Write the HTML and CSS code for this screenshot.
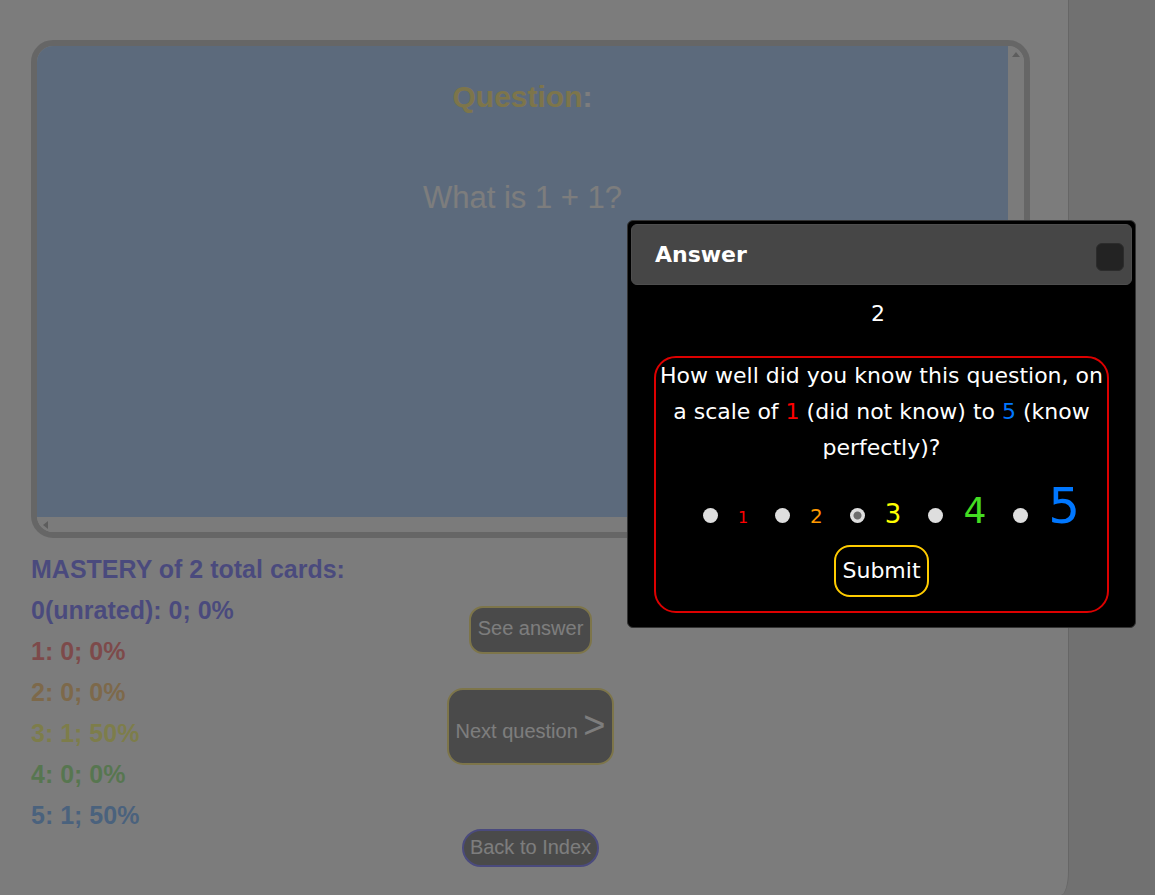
FILE: index.html
```html
<!DOCTYPE html>
<html lang="en">
<head>
<meta charset="utf-8">
<title>Flashcards</title>
<link rel="stylesheet" href="styles.css">
</head>
<body>
<div class="page">
  <div class="card">
    <div class="card-body">
      <div class="q-label"><span class="gold">Question</span>:</div>
      <div class="q-text">What is 1 + 1?</div>
    </div>
    <div class="vbar">
      <span class="sb-btn"><span class="tri tri-up"></span></span>
      <span class="sb-btn"><span class="tri tri-down"></span></span>
    </div>
    <div class="hbar">
      <span class="sb-btn"><span class="tri tri-left"></span></span>
      <span class="sb-btn"><span class="tri tri-right"></span></span>
    </div>
    <div class="sb-corner"></div>
  </div>
  <div class="lower">
    <div class="mastery">
      <div class="m-blue">MASTERY of 2 total cards:</div>
      <div class="m-blue">0(unrated): 0; 0%</div>
      <div class="m-red">1: 0; 0%</div>
      <div class="m-orange">2: 0; 0%</div>
      <div class="m-yellow">3: 1; 50%</div>
      <div class="m-green">4: 0; 0%</div>
      <div class="m-sky">5: 1; 50%</div>
    </div>
    <div class="actions">
      <button class="btn btn-see" type="button">See answer</button>
      <button class="btn btn-next" type="button">Next question <span class="arrow">&gt;</span></button>
      <a class="btn btn-back" href="#">Back to Index</a>
    </div>
    <div class="spacer"></div>
  </div>
</div>

<div class="overlay"></div>

<div class="dialog" role="dialog">
  <div class="dlg-head">
    <span class="dlg-title">Answer</span>
    <button class="dlg-close" type="button" aria-label="close"></button>
  </div>
  <div class="dlg-body">
    <div class="answer">2</div>
    <div class="rate-box">
      <div class="rate-q">How well did you know this question, on a scale of <span class="c1">1</span> (did not know) to <span class="c5">5</span> (know perfectly)?</div>
      <div class="scale">
        <input type="radio" name="r" class="radio"><span class="num c1 s1">1</span>
        <input type="radio" name="r" class="radio"><span class="num c2 s2">2</span>
        <input type="radio" name="r" class="radio" checked><span class="num c3 s3">3</span>
        <input type="radio" name="r" class="radio"><span class="num c4 s4">4</span>
        <input type="radio" name="r" class="radio"><span class="num c5 s5">5</span>
      </div>
      <button class="submit" type="button">Submit</button>
    </div>
  </div>
</div>
</body>
</html>
```
FILE: styles.css
```css
html, body {
  margin: 0;
  height: 100%;
}

body {
  background: #c0c0c0;
  font-family: "Liberation Sans", Arial, sans-serif;
}

.page {
  width: 1069px;
  height: 100vh;
  box-sizing: border-box;
  background: #f8f8f8;
  border-right: 1px solid #8e8e8e;
  border-bottom-right-radius: 8px 24px;
  padding: 40px 0 0 31px;
}

.card {
  width: 999px;
  height: 498px;
  box-sizing: border-box;
  border: 6px solid #8e8e8e;
  border-radius: 22px;
  overflow: hidden;
  display: grid;
  grid-template-columns: 1fr 16px;
  grid-template-rows: 1fr 15px;
}

.card-body {
  background: #5ca2f7;
  color: #ffffff;
  text-align: center;
  padding-top: 34px;
  overflow: hidden;
}

.vbar,
.hbar,
.sb-corner {
  background: #f5f5f5;
}

.vbar {
  display: flex;
  flex-direction: column;
  justify-content: space-between;
}

.hbar {
  display: flex;
  justify-content: space-between;
}

.sb-btn {
  width: 16px;
  height: 16px;
  display: flex;
  align-items: center;
  justify-content: center;
}

.hbar .sb-btn {
  height: 15px;
}

.tri {
  width: 0;
  height: 0;
  border-style: solid;
  border-color: transparent;
}

.tri-up {
  border-width: 0 4.5px 5px;
  border-bottom-color: #606060;
}

.tri-down {
  border-width: 5px 4.5px 0;
  border-top-color: #606060;
}

.tri-left {
  border-width: 4.5px 5px 4.5px 0;
  border-right-color: #606060;
}

.tri-right {
  border-width: 4.5px 0 4.5px 5px;
  border-left-color: #606060;
}

.q-label {
  font-weight: bold;
  font-size: 30px;
  line-height: 34px;
}

.gold {
  color: #ffd700;
}

.q-text {
  margin-top: 66px;
  font-size: 31px;
  line-height: 36px;
}

.lower {
  display: grid;
  grid-template-columns: 1fr auto 1fr;
  width: 999px;
  margin-top: 11px;
}

.mastery {
  font-weight: bold;
  font-size: 25px;
  line-height: 41px;
  white-space: nowrap;
}

.m-blue { color: #0000ff; }
.m-red { color: #ff0000; }
.m-orange { color: #ff9900; }
.m-yellow { color: #ffff00; }
.m-green { color: #44dd22; }
.m-sky { color: #0077ff; }

.actions {
  display: flex;
  flex-direction: column;
  align-items: center;
  padding-top: 57px;
}

.btn {
  font-family: "Liberation Sans", Arial, sans-serif;
  font-size: 20px;
  line-height: 23px;
  color: #ffffff;
  background: #000000;
  border: 2px solid #ffd700;
  margin: 0;
  text-decoration: none;
  display: block;
  white-space: nowrap;
}

.btn-see {
  padding: 9px 7px 12px;
  border-radius: 14px;
}

.btn-next {
  margin-top: 34px;
  line-height: normal;
  padding: 14px 6px 16px;
  border-radius: 16px;
}

.arrow {
  font-size: 38px;
}

.btn-back {
  margin-top: 64px;
  padding: 5px 6px 6px;
  border-color: #0000ff;
  border-radius: 19px;
}

.overlay {
  position: fixed;
  inset: 0;
  background: #5c5c5c;
  opacity: 0.8;
}

.dialog {
  position: absolute;
  left: 627px;
  top: 220px;
  width: 509px;
  height: 408px;
  box-sizing: border-box;
  background: #000000;
  border: 1px solid #333333;
  border-radius: 6px;
  padding: 3px;
  font-family: "DejaVu Sans", Verdana, sans-serif;
  color: #ffffff;
}

.dlg-head {
  height: 61px;
  box-sizing: border-box;
  background: #464646;
  border: 1px solid #4e4e4e;
  border-radius: 6px;
  display: flex;
  align-items: center;
  justify-content: space-between;
  padding: 0 7px 0 23px;
}

.dlg-title {
  font-weight: bold;
  font-size: 22px;
}

.dlg-close {
  width: 28px;
  height: 28px;
  margin-top: 4px;
  padding: 0;
  background: #232323;
  border: 1px solid #2c2c2c;
  border-radius: 6px;
}

.dlg-body {
  padding: 0 23px;
  text-align: center;
}

.answer {
  margin-top: 11px;
  padding-right: 7px;
  font-size: 22px;
  line-height: 36px;
}

.rate-box {
  margin-top: 24px;
  border: 2px solid #dd0000;
  border-radius: 22px;
  padding-bottom: 14px;
}

.rate-q {
  font-size: 22px;
  line-height: 36px;
}

.c1 { color: #ff0000; }
.c2 { color: #ff9900; }
.c3 { color: #ffff00; }
.c4 { color: #44dd22; }
.c5 { color: #0077ff; }

.scale {
  display: flex;
  justify-content: center;
  align-items: baseline;
  margin-top: 15px;
  padding-left: 20px;
}

.radio {
  appearance: none;
  -webkit-appearance: none;
  width: 15px;
  height: 15px;
  margin: 0 20px 0 0;
  border-radius: 50%;
  background: #dedede;
}

.radio:checked {
  background: radial-gradient(circle, #6d6d6d 0 3.5px, #dedede 4.5px);
}

.num {
  line-height: 1;
  margin-right: 27px;
}

.num.s5 {
  margin-right: 0;
}

.s1 { font-size: 16px; }
.s2 { font-size: 20px; }
.s3 { font-size: 26px; }
.s4 { font-size: 36px; }
.s5 { font-size: 50px; }

.submit {
  margin-top: 14px;
  font-family: "DejaVu Sans", Verdana, sans-serif;
  font-size: 22px;
  line-height: 36px;
  color: #ffffff;
  background: transparent;
  border: 2px solid #ffcc00;
  border-radius: 16px;
  padding: 6px;
}
```
